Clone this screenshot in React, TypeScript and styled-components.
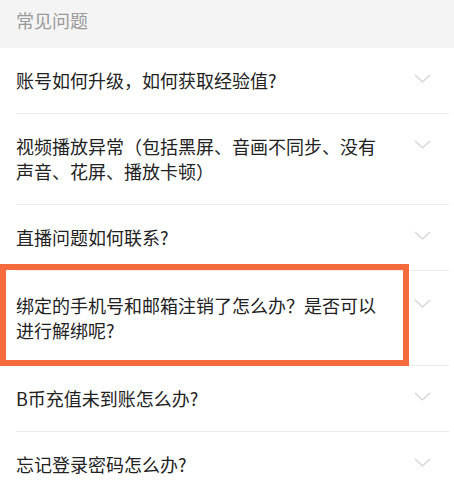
import React from "react";
import styled, { createGlobalStyle, css } from "styled-components";

const GlobalStyle = createGlobalStyle`
    html, body {
        margin: 0;
        padding: 0;
        background: #ffffff;
    }
    body {
        font-family: "Noto Sans CJK SC", "Noto Sans", sans-serif;
    }
`;

const Page = styled.div`
    width: 454px;
    height: 496px;
    overflow: hidden;
    background: #ffffff;
`;

const Header = styled.div`
    height: 48px;
    box-sizing: border-box;
    padding: 8px 16px;
    background: #f4f4f4;
    color: #9a9a9a;
    font-size: 18px;
    line-height: 24px;
`;

const List = styled.ul`
    list-style: none;
    margin: 0;
    padding: 0;
`;

const Row = styled.li<{ $highlight?: boolean }>`
    position: relative;
    display: flex;
    align-items: flex-start;
    margin: 0 5px 0 16px;
    padding: 20px 0;
    border-bottom: 1px solid #ececec;

    ${(p) =>
        p.$highlight &&
        css`
            padding: 22px 0;

            /* 标注框 */
            &::after {
                content: "";
                position: absolute;
                top: -7px;
                left: -16px;
                width: 409px;
                bottom: -1px;
                box-sizing: border-box;
                border: 6px solid #f56b3d;
                pointer-events: none;
            }
        `}
`;

const Question = styled.span`
    flex: 0 1 366px;
    color: #222222;
    font-size: 18px;
    line-height: 25px;
    word-break: break-all;
`;

const Arrow = styled.svg`
    flex: none;
    margin: 6px 18px 0 auto;
`;

const Chevron = () => (
    <Arrow width="17" height="9" viewBox="0 0 17 9">
        <polyline points="1,1 8.5,8 16,1" fill="none" stroke="#d2d2d2" strokeWidth="1.2" />
    </Arrow>
);

const questions = [
    { text: "账号如何升级，如何获取经验值?" },
    { text: "视频播放异常（包括黑屏、音画不同步、没有声音、花屏、播放卡顿）" },
    { text: "直播问题如何联系?" },
    { text: "绑定的手机号和邮箱注销了怎么办？是否可以进行解绑呢?", highlight: true },
    { text: "B币充值未到账怎么办?" },
    { text: "忘记登录密码怎么办?" },
];

const App = () => {
    return (
        <>
            <GlobalStyle />
            <Page>
                <Header>常见问题</Header>
                <List>
                    {questions.map((q) => (
                        <Row key={q.text} $highlight={q.highlight}>
                            <Question>{q.text}</Question>
                            <Chevron />
                        </Row>
                    ))}
                </List>
            </Page>
        </>
    );
};

export default App;
